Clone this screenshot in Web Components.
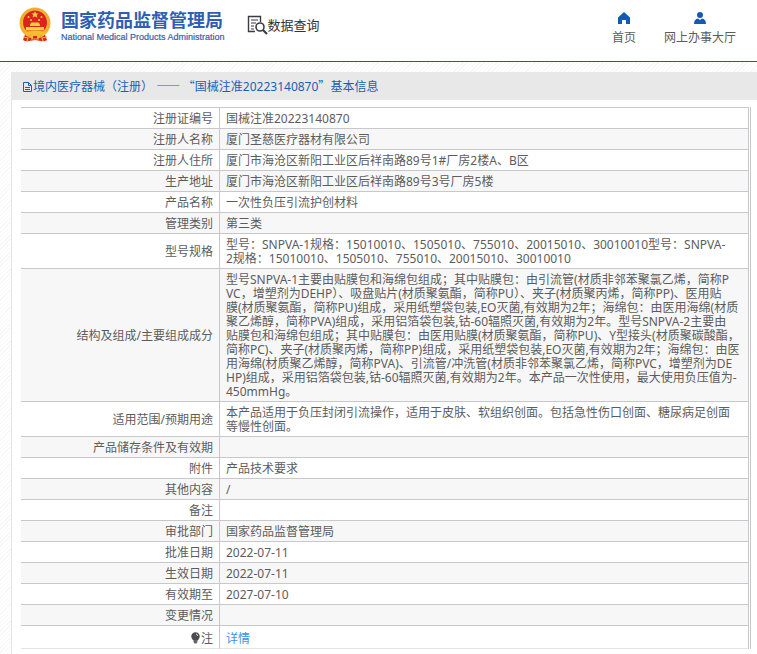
<!DOCTYPE html>
<html lang="zh-CN">
<head>
<meta charset="utf-8">
<title>国家药品监督管理局 数据查询</title>
<style>
html, body { height: 100%; }
body {
  margin: 0; display: flex; flex-direction: column;
  font: 12px/14px "Noto Sans", "Noto Sans CJK SC", sans-serif; color: #5c5c5c;
  background: repeating-linear-gradient(135deg, #fff 0 2px, #f8f8f8 2px 3px);
}
</style>
</head>
<body>
<nmpa-header>
  <nav-link icon="home">首页</nav-link>
  <nav-link icon="user">网上办事大厅</nav-link>
</nmpa-header>
<record-panel>
  <record-title slot="title" code="国械注准20223140870">境内医疗器械（注册）</record-title>
  <record-table></record-table>
</record-panel>
<script>
class BaseElement extends HTMLElement {
  connectedCallback() {
    if (!this.shadowRoot) this.attachShadow({ mode: 'open' }).innerHTML = this.render();
  }
}

customElements.define('national-emblem', class extends BaseElement {
  render() {
    return `<style>:host{display:block;width:34px;height:36px}svg{display:block}</style>
<svg width="34" height="36" viewBox="0 0 34 36" aria-hidden="true">
  <path d="M8 25 Q17 29 26 25 L29 33 Q26 35 23 34 L17 33 11 34Q8 35 5 33Z" fill="#d42a1c"/>
  <circle cx="17" cy="16" r="15.5" fill="#f2b632"/>
  <circle cx="17" cy="16" r="14" fill="none" stroke="#e8a028" stroke-width="1" stroke-dasharray="2 1"/>
  <circle cx="17" cy="15.500" r="12" fill="#dc241c"/>
  <path d="M17 4l1 2.500h2.600l-2 1.600.8 2.600-2.400-1.500-2.400 1.500.8-2.600-2-1.600h2.600z" fill="#ffd84a"/>
  <g fill="#ffd23e"><circle cx="10.500" cy="10" r="1"/><circle cx="23.500" cy="10" r="1"/><circle cx="13" cy="13" r="1"/><circle cx="21" cy="13" r="1"/>
  <path d="M12 17.500l1.500-2h7l1.500 2v1.500h-10z"/><path d="M8 20h18v3.500h-18z"/></g>
  <path d="M6 25Q17 22 28 25L25 29Q17 25 9 29Z" fill="#f5bd36"/>
  <path d="M12 29q5-5 10 0l-2 3q-3-3-6 0z" fill="#f5bd36"/>
  <path d="M15 29h4v3h-4z" fill="#dc241c"/>
  <path d="M5 30l5 1-1 3M29 30l-5 1 1 3M13 32l8 0" stroke="#f2b632" stroke-width="1.200" fill="none"/>
</svg>`;
  }
});

customElements.define('nav-link', class extends BaseElement {
  render() {
    const icons = {
      home: '<path d="M7 1L1 6.500V13H5V9H9V13H13V6.500Z"/>',
      user: '<circle cx="7" cy="4" r="3"/><path d="M1 13Q1 8 5 7.500L7 9 9 7.500Q13 8 13 13Z"/>'
    };
    return `<style>:host{display:block}
a{display:flex;flex-direction:column;align-items:center;gap:6px;color:inherit;text-decoration:none;line-height:14px}
svg{display:block;fill:#125bb5}</style>
<a href="#"><svg width="14" height="14" viewBox="0 0 14 14" aria-hidden="true">${icons[this.getAttribute('icon')]}</svg><span><slot></slot></span></a>`;
  }
});

customElements.define('nmpa-header', class extends BaseElement {
  render() {
    return `<style>
:host{display:flex;align-items:flex-start;box-sizing:border-box;height:62px;padding:7px 21px 0 18px;background:#fff;border-bottom:1px solid #1d5a98;flex:none}
.brand{display:flex;gap:9px;color:#2f5fb3;text-decoration:none}
.names{display:flex;flex-direction:column;padding-top:3px}
.zh{font-size:18px;line-height:20px;font-weight:700}
.en{font-family:"Liberation Sans",sans-serif;font-size:9px;line-height:14px;white-space:nowrap;-webkit-text-stroke:.2px currentColor}
.query{display:flex;align-items:center;margin:7px 0 0 22px;color:#333;font-size:13px;line-height:20px;white-space:nowrap}
nav{display:flex;gap:28px;margin:4px 0 0 auto}
</style>
<a class="brand" href="#"><national-emblem></national-emblem><span class="names"><span class="zh">国家药品监督管理局</span><span class="en">National Medical Products Administration</span></span></a>
<div class="query"><svg width="21" height="21" viewBox="0 0 21 21" fill="none" stroke="#3b3b45" aria-hidden="true">
<path d="M8 17.500H1.500V2.500H13.500V8" stroke-width="1.400"/><path d="M4 6h7M4 9h5M4 12h3M4 15h3" stroke-width="1.200"/><circle cx="13" cy="13" r="4" stroke-width="1.600"/><path d="M16 16l4 4" stroke-width="2.200"/></svg><span>数据查询</span></div>
<nav><slot></slot></nav>`;
  }
});

customElements.define('record-title', class extends BaseElement {
  render() {
    return `<style>
:host{display:block;background:#e8e8e8;padding:7px 10px 6px;color:#1a5fb4}
h1{display:flex;align-items:center;margin:0;font-size:12px;line-height:14px;font-weight:400;white-space:pre}
.cjk{font-family:"Noto Sans CJK SC",sans-serif}
svg{margin-left:1px}
</style>
<h1><svg width="11" height="12" viewBox="0 0 11 12" fill="none" stroke="#1a5fb4" aria-hidden="true"><path d="M1.500 1.500H6.500L9.500 4.500V10.500H1.500ZM6.500 1.500V4.500H9.500M3 6.500H8M3 8.500H8"/></svg><span><slot></slot> <span class="cjk">—— “</span>${this.getAttribute('code')}<span class="cjk">”</span>基本信息</span></h1>`;
  }
});

customElements.define('record-panel', class extends BaseElement {
  render() {
    return `<style>
:host{display:block;flex:1 0 auto;margin:10px 0 0 11px;background:#fff}
.body{border-left:1px solid #e4e4e4;padding:7px 6px 5px 9px}
</style><slot name="title"></slot><div class="body"><slot></slot></div>`;
  }
});

const rows = [
  ['注册证编号', '国械注准20223140870'],
  ['注册人名称', '厦门圣慈医疗器材有限公司'],
  ['注册人住所', '厦门市海沧区新阳工业区后祥南路89号1#厂房2楼A、B区'],
  ['生产地址', '厦门市海沧区新阳工业区后祥南路89号3号厂房5楼'],
  ['产品名称', '一次性负压引流护创材料'],
  ['管理类别', '第三类'],
  ['型号规格', '型号：SNPVA-1规格：15010010、1505010、755010、20015010、30010010型号：SNPVA-<br>2规格：15010010、1505010、755010、20015010、30010010'],
  ['结构及组成/主要组成成分', '型号SNPVA-1主要由贴膜包和海绵包组成；其中贴膜包：由引流管(材质非邻苯聚氯乙烯，简称P<br>VC，增塑剂为DEHP）、吸盘贴片(材质聚氨酯，简称PU）、夹子(材质聚丙烯，简称PP)、医用贴<br>膜(材质聚氨酯，简称PU)组成，采用纸塑袋包装,EO灭菌,有效期为2年；海绵包：由医用海绵(材质<br>聚乙烯醇，简称PVA)组成，采用铝箔袋包装,钴-60辐照灭菌,有效期为2年。型号SNPVA-2主要由<br>贴膜包和海绵包组成；其中贴膜包：由医用贴膜(材质聚氨酯，简称PU)、Y型接头(材质聚碳酸酯，<br>简称PC)、夹子(材质聚丙烯，简称PP)组成，采用纸塑袋包装,EO灭菌,有效期为2年；海绵包：由医<br>用海绵(材质聚乙烯醇，简称PVA)、引流管/冲洗管(材质非邻苯聚氯乙烯，简称PVC，增塑剂为DE<br>HP)组成，采用铝箔袋包装,钴-60辐照灭菌,有效期为2年。本产品一次性使用，最大使用负压值为-<br>450mmHg。'],
  ['适用范围/预期用途', '本产品适用于负压封闭引流操作，适用于皮肤、软组织创面。包括急性伤口创面、糖尿病足创面<br>等慢性创面。'],
  ['产品储存条件及有效期', ''],
  ['附件', '产品技术要求'],
  ['其他内容', '/'],
  ['备注', ''],
  ['审批部门', '国家药品监督管理局'],
  ['批准日期', '2022-07-11'],
  ['生效日期', '2022-07-11'],
  ['有效期至', '2027-07-10'],
  ['变更情况', '']
];

customElements.define('record-table', class extends BaseElement {
  render() {
    return `<style>
:host{display:block;border-right:1px solid #c8c8cc;padding-right:1px}
table{width:100%;border-collapse:separate;border-spacing:0;border-right:1px solid #c8c8cc}
th,td{border-top:1px solid #c8c8cc;padding:4px 6px 2px;height:14px;font-weight:400;line-height:14px}
th{box-sizing:border-box;width:198px;text-align:right;white-space:nowrap}
td{border-left:1px solid #c8c8cc;text-align:left}
tr:nth-child(even){background:#f7f7f7}
tr:last-child>*{padding:6px 6px 2px;border-bottom:1px solid #e4e4e4;background:#fff}
a{color:#3d8ee6;text-decoration:none}
svg{vertical-align:-1px}
</style>
<table><tbody>${rows.map(([k, v]) => `<tr><th scope="row">${k}</th><td>${v}</td></tr>`).join('')}
<tr><th scope="row"><svg width="11" height="12" viewBox="0 0 11 12" aria-hidden="true"><circle cx="5.500" cy="4.500" r="4.200" fill="#4c4c4c"/><path d="M3.500 8h4v2l-1 1.500h-2l-1-1.500z" fill="#666"/><path d="M6 2q1.500.3 1.500 2" stroke="#ddd" fill="none"/></svg>注</th><td><a href="#">详情</a></td></tr></tbody></table>`;
  }
});
</script>
</body>
</html>
